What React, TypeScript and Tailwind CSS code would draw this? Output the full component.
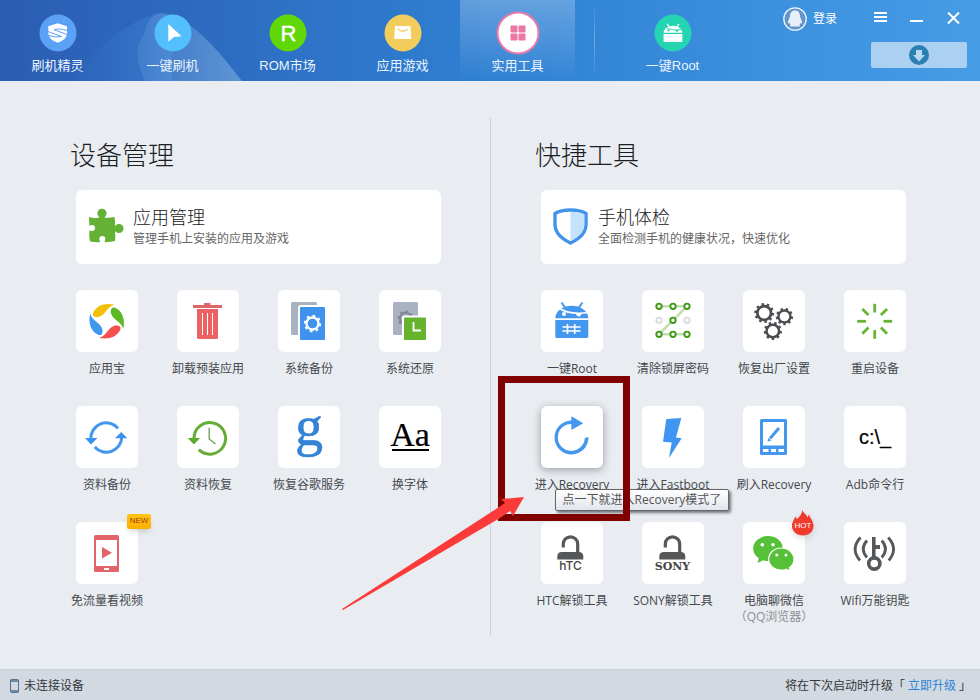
import React from "react";

type Tool = {
  name: string
  icon: React.ReactNode
  note?: string
  badge?: 'new' | 'hot'
  hovered?: boolean
  tip?: string
}

type NavItemProps = {
  name: string
  icon: React.ReactNode
  active?: boolean
}

const Tile = ({children}: { children: React.ReactNode }) => (
  <svg viewBox="0 0 62 62" className="size-full overflow-visible" aria-hidden="true">{children}</svg>
)

// ring with evenly spaced teeth drawn as a dashed stroke
const Gear = ({x, y, r, color, teeth = 9}: { x: number, y: number, r: number, color: string, teeth?: number }) => (
  <g fill="none" stroke={color} transform={`translate(${x} ${y})`}>
    <circle r={r * 0.7} strokeWidth={r * 0.28}/>
    <circle r={r * 0.88} strokeWidth={r * 0.26} pathLength={teeth * 2} strokeDasharray="0.9 1.1"/>
  </g>
)

const Padlock = ({x}: { x: number }) => (
  <g transform={`translate(${x} 0)`}>
    <path d="M6 25.5V22a7.2 7.2 0 0 1 14.4 0v9" fill="none" stroke="#555759" strokeWidth="3.2"/>
    <path d="M0 37.500v-3Q0 30 4.500 30h17Q26 30 26 34.500v3z" fill="#555759"/>
  </g>
)

const AndroidHead = ({color, strap}: { color: string, strap: string }) => (
  <g>
    <path d="M20.500 12.500L24 17.500M41.500 12.500L38 17.500" stroke={color} strokeWidth="2"/>
    <path d="M14.300 28.300C14.500 20.500 22 15.700 30.800 15.700S47 20.500 47.300 28.300z" fill={color}/>
    <path d="M17 17.500Q28 25.500 47.500 22.500" fill="none" stroke={strap} strokeWidth="1.600"/>
    <circle cx="23" cy="24" r="2" fill={strap}/>
    <path d="M34.500 23.200l6.500 0-2 3.200q-3 .500-4.500-3.200z" fill={strap}/>
  </g>
)

const deviceTools: Tool[] = [
  {
    name: '应用宝',
    icon: (
      <Tile>
        {['#f3c007', '#5cbb25', '#f4504f', '#4196ee'].map((c, i) => (
          <path key={c} fill={c} transform={`rotate(${i * 90} 30.700 31.300)`}
                d="M38.500 14.800C29.500 12.500 20 15.500 17 23.300C16 27 20 27.800 23.500 26.700C30 24.500 30.500 16.800 38.500 14.800Z"/>
        ))}
      </Tile>
    )
  },
  {
    name: '卸载预装应用',
    icon: (
      <Tile>
        <path d="M27 13h6.500v2H45v3H16v-3h11z" fill="#dd666b"/>
        <path d="M20 19h21v28.500q0 1.500-1.500 1.500h-18q-1.500 0-1.500-1.500z" fill="#ec6164"/>
        <path d="M25.500 23v22M30.500 23v22M35.500 23v22" stroke="#fff" strokeWidth="1"/>
      </Tile>
    )
  },
  {
    name: '系统备份',
    icon: (
      <Tile>
        <rect x="13" y="12" width="26" height="33" rx="1.500" fill="#a9b2c0"/>
        <rect x="21" y="16" width="27" height="35" rx="2" fill="#3f93ee" stroke="#fff" strokeWidth="2"/>
        <Gear x={34.5} y={33.5} r={8.6} color="#fff" teeth={8}/>
      </Tile>
    )
  },
  {
    name: '系统还原',
    icon: (
      <Tile>
        <rect x="14" y="12" width="25" height="33" rx="1.500" fill="#a9b2c2"/>
        <Gear x={26.5} y={28.5} r={8} color="#848799" teeth={8}/>
        <rect x="24" y="26.500" width="24" height="24.500" rx="2" fill="#66b32e" stroke="#fff" strokeWidth="2"/>
        <path d="M34.500 32v8.500H42" fill="none" stroke="#fff" strokeWidth="1.800"/>
      </Tile>
    )
  },
  {
    name: '资料备份',
    icon: (
      <Tile>
        <g fill="none" stroke="#4396ee" strokeWidth="3">
          <path d="M14.800 33A15.500 15.500 0 0 1 42 22.200"/>
          <path d="M18.700 41A15.500 15.500 0 0 0 45.800 31"/>
        </g>
        <path d="M9 32h12.500L15 38.500zM39 32.300h12.300l-6-6.300z" fill="#3a90ee"/>
      </Tile>
    )
  },
  {
    name: '资料恢复',
    icon: (
      <Tile>
        <path d="M17 33A15.800 15.800 0 1 1 21.800 43.700" fill="none" stroke="#66ad36" strokeWidth="3"/>
        <path d="M10.700 32H23l-6 6.500z" fill="#59ab2b"/>
        <path d="M32.200 21.700v11.200l6.300 5" fill="none" stroke="#66a04a" strokeWidth="1.300"/>
      </Tile>
    )
  },
  {
    name: '恢复谷歌服务',
    icon: (
      <Tile>
        <text x="31" y="39" textAnchor="middle" fill="#3583d6" stroke="#3583d6" strokeWidth="0.600"
              className="font-['Liberation_Serif',serif] text-[56px]">g</text>
      </Tile>
    )
  },
  {
    name: '换字体',
    icon: (
      <Tile>
        <text x="31" y="40" textAnchor="middle" fill="#000" stroke="#000" strokeWidth="0.200"
              className="font-['Liberation_Serif',serif] text-[34px]">Aa</text>
        <path d="M13 44h37" stroke="#000" strokeWidth="2"/>
      </Tile>
    )
  },
  {
    name: '免流量看视频',
    badge: 'new',
    icon: (
      <Tile>
        <rect x="18" y="13" width="25" height="37" rx="1.500" fill="#e2646a"/>
        <path d="M20 18h21v26H20zM28 46h5v2h-5z" fill="#fff"/>
        <path d="M26 25l10 5.700-10 5.700z" fill="#e2646a"/>
      </Tile>
    )
  },
]

const quickTools: Tool[] = [
  {
    name: '一键Root',
    icon: (
      <Tile>
        <AndroidHead color="#4497ee" strap="#fff"/>
        <path d="M14.300 30h33v16.500q0 1.500-1.500 1.500h-30q-1.500 0-1.500-1.500z" fill="#4497ee"/>
        <path d="M26.500 34v10M33.700 34v10M21.500 37h18M21.500 41h18" stroke="#fff" strokeWidth="1.600"/>
      </Tile>
    )
  },
  {
    name: '清除锁屏密码',
    icon: (
      <Tile>
        <path d="M17 16.300h28l-28 28h28" fill="none" stroke="#c3dfaf" strokeWidth="2.600"/>
        {[17, 31, 45].map(x => [16.3, 30.3, 44.3].map(y => (
          <circle key={`${x}-${y}`} cx={x} cy={y} r="2.700" fill="#fff" strokeWidth="1.900"
                  stroke={y === 30.3 && x !== 31 ? '#dcdcdc' : '#3f9b16'}/>
        )))}
      </Tile>
    )
  },
  {
    name: '恢复出厂设置',
    icon: (
      <Tile>
        <Gear x={21.2} y={23} r={9.8} color="#4a4c50" teeth={10}/>
        <Gear x={41.4} y={26.5} r={8.6} color="#4a4c50"/>
        <Gear x={29.8} y={41} r={9} color="#4a4c50"/>
      </Tile>
    )
  },
  {
    name: '重启设备',
    icon: (
      <Tile>
        {[0, 45, 90, 135, 180, 225, 270, 315].map(a => (
          <path key={a} d="M30.700 13.800v8.700" stroke="#68b436" strokeWidth="2.800"
                transform={`rotate(${a} 30.700 31.300)`}/>
        ))}
      </Tile>
    )
  },
  {
    name: '进入Recovery',
    hovered: true,
    tip: '点一下就进入Recovery模式了',
    icon: (
      <Tile>
        <path d="M47.500 31L43.800 32A13.500 13.500 0 1 1 31 17.900V14.500A17 17 0 1 0 47.500 31z" fill="#4497ee"/>
        <path d="M30.300 10.300l12 7-12 6.700z" fill="#4497ee"/>
      </Tile>
    )
  },
  {
    name: '进入Fastboot',
    icon: (
      <Tile>
        <path d="M24.300 13l15-1-5.300 19.500 5.700.800L27 52l2.700-15.500-8.700-.800z" fill="#3f96f2"/>
      </Tile>
    )
  },
  {
    name: '刷入Recovery',
    icon: (
      <Tile>
        <rect x="17" y="13" width="27" height="36" rx="1.500" fill="#4497ee"/>
        <path d="M20 16h21v23.500H20zM20 43h5.500v3H20zM28 43h5v3h-5zM35.500 43H41v3h-5.500z" fill="#fff"/>
        <path d="M27 32.500l9-10.500" stroke="#4497ee" strokeWidth="3"/>
        <path d="M25.300 32l3 2.600-3.800 1.200z" fill="#4497ee"/>
      </Tile>
    )
  },
  {
    name: 'Adb命令行',
    icon: (
      <Tile>
        <text x="31" y="38" textAnchor="middle" fill="#000" stroke="#000" strokeWidth="0.200"
              className="font-['Liberation_Sans',sans-serif] text-[20px]">c:\_</text>
      </Tile>
    )
  },
  {
    name: 'HTC解锁工具',
    icon: (
      <Tile>
        <Padlock x={16.3}/>
        <text x="29.500" y="48" textAnchor="middle" fill="#444"
              className="font-[Inter,sans-serif] text-[12px] font-medium">hTC</text>
      </Tile>
    )
  },
  {
    name: 'SONY解锁工具',
    icon: (
      <Tile>
        <Padlock x={17.3}/>
        <text x="30.500" y="48" textAnchor="middle" fill="#444"
              className="font-['DejaVu_Serif',serif] text-[11px] font-bold">SONY</text>
      </Tile>
    )
  },
  {
    name: '电脑聊微信',
    note: '（QQ浏览器）',
    badge: 'hot',
    icon: (
      <Tile>
        <path d="M25 14c8.300 0 14.800 5.500 14.800 12.500S33.300 39 25 39c-2 0-3.500-.300-5-.800L14.500 41l1.300-4.700C12.300 34 10.200 30.500 10.200 26.500 10.200 19.500 16.700 14 25 14z" fill="#55c038"/>
        <path d="M38.300 26c7 0 12.700 5 12.700 11.200 0 3.500-1.800 6.500-4.600 8.500l1 3.500-4-2c-1.600.600-3.300.900-5.100.900-7 0-12.600-4.800-12.600-10.900S31.300 26 38.300 26z" fill="#55c038" stroke="#fff" strokeWidth="1.200"/>
        <g fill="#fff">
          <circle cx="19.300" cy="22.700" r="1.800"/>
          <circle cx="30" cy="22.700" r="1.800"/>
          <circle cx="33.800" cy="33" r="1.500"/>
          <circle cx="43" cy="33" r="1.500"/>
        </g>
      </Tile>
    )
  },
  {
    name: 'Wifi万能钥匙',
    icon: (
      <Tile>
        <g fill="none" stroke="#55585b" strokeWidth="2.800">
          <circle cx="30.300" cy="41.500" r="5.600" strokeWidth="3.600"/>
          <path d="M29.800 15v21" strokeWidth="3.600"/>
          <path d="M31 25h5" strokeWidth="4"/>
          <path d="M23 18.500Q15.500 27 23 35.500M16.500 15.500Q6 27 16 38.500"/>
          <path d="M37.700 18.500Q45.200 27 37.700 35.500M44.200 15.500Q54.700 27 44.700 38.500"/>
        </g>
      </Tile>
    )
  },
]

const navItems: NavItemProps[] = [
  {
    name: '刷机精灵',
    icon: (
      <svg viewBox="0 0 38 38" className="size-[38px]">
        <circle cx="19" cy="19" r="18.500" fill="#5ba2f7"/>
        <path d="M18.700 9.300L28 12.300V19q0 6.500-9.300 9.700Q9.300 25.500 9.300 19v-6.700z" fill="#fff"/>
        <path d="M28.500 16.500q-9-2.500-13.500-.800l13.500 5M9 17.500l13.500 5q-6 1.500-13-1" fill="none" stroke="#5ba2f7" strokeWidth="1"/>
      </svg>
    )
  },
  {
    name: '一键刷机',
    icon: (
      <svg viewBox="0 0 38 38" className="size-[38px]">
        <circle cx="19" cy="19" r="18.500" fill="#53bffc"/>
        <path d="M14.300 10l13.200 12.300-7.500.700-5.700 4.700z" fill="#fff"/>
      </svg>
    )
  },
  {
    name: 'ROM市场',
    icon: (
      <svg viewBox="0 0 38 38" className="size-[38px]">
        <circle cx="19" cy="19" r="18.500" fill="#60d808"/>
        <text x="19.500" y="26.500" textAnchor="middle" fill="#fff" stroke="#fff" strokeWidth="0.400"
              className="font-['Liberation_Sans',sans-serif] text-[22px]">R</text>
      </svg>
    )
  },
  {
    name: '应用游戏',
    icon: (
      <svg viewBox="0 0 38 38" className="size-[38px]">
        <circle cx="19" cy="19" r="18.500" fill="#f3cd5c"/>
        <path d="M11 12h15.500l.700 13H10.300z" fill="#fff"/>
        <path d="M14 15q5 4.500 9.500 0" fill="none" stroke="#f3cd5c" strokeWidth="1.200"/>
      </svg>
    )
  },
  {
    name: '实用工具',
    active: true,
    icon: (
      <svg viewBox="0 0 44 44" className="size-[44px] shrink-0">
        <circle cx="22" cy="22" r="20.500" fill="#fff" stroke="#ec78ae" strokeWidth="2"/>
        <g fill="#ec77a2">
          <rect x="14.500" y="14.500" width="7" height="7" rx="1"/>
          <rect x="22.500" y="14.500" width="7" height="7" rx="1"/>
          <rect x="14.500" y="22.500" width="7" height="7" rx="1"/>
          <rect x="22.500" y="22.500" width="7" height="7" rx="1"/>
        </g>
      </svg>
    )
  },
]

const rootItem: NavItemProps = {
  name: '一键Root',
  icon: (
    <svg viewBox="0 0 38 38" className="size-[38px]">
      <circle cx="19" cy="19" r="18.500" fill="#25d5b2"/>
      <g transform="translate(1.400 2.700) scale(0.570)">
        <AndroidHead color="#fff" strap="#25d5b2"/>
        <path d="M14.300 30.500h33V43q0 1.500-1.500 1.500h-30q-1.500 0-1.500-1.500z" fill="#fff"/>
      </g>
    </svg>
  )
}

export default function App() {
  return (
    <div className="flex min-h-screen flex-col bg-[#e9edf2] font-['Open_Sans','Noto_Sans_CJK_SC',sans-serif] text-xs text-[#44484d]">
      <Header/>
      <main className="flex flex-1">
        <section className="flex-1 pt-14 pr-[49px] pl-[70px]">
          <h2 className="mb-[17px] text-[26px] leading-9 font-light text-[#1c1e22]">设备管理</h2>
          <div className="pl-[6px]">
            <FeatureCard title="应用管理" text="管理手机上安装的应用及游戏" icon={<Puzzle/>}/>
            <ToolGrid tools={deviceTools}/>
          </div>
        </section>
        <div className="mt-[37px] mb-[34px] w-px bg-[#cbd0d6]"/>
        <section className="flex-1 pt-14 pr-[74px] pl-[44px]">
          <h2 className="mb-[17px] text-[26px] leading-9 font-light text-[#1c1e22]">快捷工具</h2>
          <div className="pl-[6px]">
            <FeatureCard title="手机体检" text="全面检测手机的健康状况，快速优化" icon={<Shield/>}/>
            <ToolGrid tools={quickTools}/>
          </div>
        </section>
      </main>
      <Footer/>
    </div>
  );
}

const Header = () => {
  return (
    <header className="relative flex h-[81px] overflow-hidden bg-linear-to-r from-[#2b5db2] via-[#2f80d3] to-[#469ce5] text-white">
      <svg viewBox="0 0 260 81" className="pointer-events-none absolute top-0 left-0 h-[81px] w-[260px]" aria-hidden="true">
        <defs>
          <linearGradient id="glow" x1="0" x2="1">
            <stop offset="0" stopColor="#3f86d8" stopOpacity="0"/>
            <stop offset="1" stopColor="#3f86d8" stopOpacity="0.500"/>
          </linearGradient>
          <linearGradient id="beam" x1="0" x2="1">
            <stop offset="0" stopColor="#8fbbea" stopOpacity="0.150"/>
            <stop offset="1" stopColor="#8fbbea" stopOpacity="0.500"/>
          </linearGradient>
        </defs>
        <path d="M70 81Q110 30 150 16Q160 11 172 16L172 81z" fill="url(#glow)"/>
        <path d="M145 81Q130 50 144 35Q148 14 162 13C190 16 218 50 242 81z" fill="url(#beam)"/>
      </svg>
      <nav className="relative flex">
        {navItems.map(item => <NavItem key={item.name} {...item}/>)}
        <div className="ml-[19px] mr-5 w-px bg-linear-to-b from-white/0 via-white/30 to-white/0"/>
        <NavItem {...rootItem}/>
      </nav>
      <div className="relative ml-auto flex flex-col pr-[13px]">
        <div className="flex h-9 items-center justify-end pr-[7px]">
          <button className="mr-[37px] flex items-center gap-1.5 pt-0.5">
            <svg viewBox="0 0 24 24" className="size-6">
              <circle cx="12" cy="12" r="11.200" fill="#6395c8" stroke="#e8f3ff" strokeWidth="1.300"/>
              <path d="M12 3.500c3.500 0 5 2.500 5 5.500 0 2 2 4 2 6.500 0 1.500-1 1-1.500.500-.300 1-.700 1.500-1.200 2 1 .500 1.200 1.500-.300 1.500H8c-1.500 0-1.300-1-.300-1.500-.500-.500-.900-1-1.200-2-.500.500-1.500 1-1.500-.500C5 13 7 11 7 9c0-3 1.500-5.500 5-5.500z" fill="#e7eff8"/>
            </svg>
            <span className="leading-4">登录</span>
          </button>
          <button aria-label="菜单" className="mr-[23px]">
            <svg viewBox="0 0 13 12" className="block h-3 w-[13px]"><path d="M0 1h13M0 5h13M0 9h13" stroke="#fff" strokeWidth="2"/></svg>
          </button>
          <button aria-label="最小化" className="mr-6">
            <svg viewBox="0 0 13 12" className="block h-3 w-[13px]"><path d="M0 9h13" stroke="#fff" strokeWidth="2"/></svg>
          </button>
          <button aria-label="关闭">
            <svg viewBox="0 0 13 12" className="block h-3 w-[13px]"><path d="M1 .500l11 11M12 .500l-11 11" stroke="#fff" strokeWidth="2"/></svg>
          </button>
        </div>
        <button aria-label="下载" className="mt-1.5 flex h-[26px] w-24 items-center justify-center self-end rounded-xs bg-[#abd0f1]">
          <svg viewBox="0 0 20 20" className="size-5">
            <circle cx="10" cy="10" r="10" fill="#2b80b3"/>
            <path d="M7 5h6v5h3l-6 6.500L4 10h3z" fill="#b8d9f2"/>
          </svg>
        </button>
      </div>
    </header>
  )
}

const NavItem = ({name, icon, active}: NavItemProps) => {
  return (
    <button className={`flex w-[115px] flex-col items-center pt-3.5 ${active ? 'bg-linear-to-b from-white/25 to-white/0' : ''}`}>
      <span className="flex h-[38px] items-center justify-center">{icon}</span>
      <span className="mt-1.5 font-['Liberation_Sans','Noto_Sans_CJK_SC',sans-serif] text-[13px] leading-4 text-[#eaf4ff]">{name}</span>
    </button>
  )
}

const FeatureCard = ({title, text, icon}: { title: string, text: string, icon: React.ReactNode }) => {
  return (
    <button className="flex h-[74px] w-full items-center gap-[9px] rounded-md bg-white pl-3 text-left">
      {icon}
      <span className="flex flex-col">
        <span className="text-[18px] leading-6 font-light text-[#16181b]">{title}</span>
        <span className="leading-5 text-[#666]">{text}</span>
      </span>
    </button>
  )
}

const ToolGrid = ({tools}: { tools: Tool[] }) => {
  return (
    <ul className="mt-[26px] grid grid-cols-[repeat(4,62px)] justify-between gap-y-[30px]">
      {tools.map(tool => <ToolItem key={tool.name} {...tool}/>)}
    </ul>
  )
}

const ToolItem = ({name, icon, note, badge, hovered, tip}: Tool) => {
  return (
    <li className="relative h-[86px]">
      <button className="flex w-full flex-col items-center whitespace-nowrap">
        <span className={`block size-[62px] rounded-md bg-white ${hovered ? 'shadow-[0_2px_8px_rgba(0,0,0,0.35)]' : ''}`}>{icon}</span>
        <span className="mt-[9px] leading-4">{name}</span>
        {note && <span className="leading-4 text-[#8d9196]">{note}</span>}
      </button>
      {badge === 'new' && (
        <span className="absolute -top-2 left-[51px] flex h-[15px] w-6 items-center justify-center rounded-xs bg-linear-to-b from-[#ffc414] to-[#fbb000] font-['Liberation_Sans',sans-serif] text-[8px] text-[#a03c00] shadow-md">NEW</span>
      )}
      {badge === 'hot' && (
        <span className="absolute -top-3 left-12 flex h-[26px] w-6 items-end justify-center">
          <svg viewBox="0 0 24 26" className="absolute inset-0 drop-shadow-md">
            <path d="M11.500 0c1 3.500 4 4 5 7.500l1.500-3c.500 2.500 4.500 6.500 4.500 11.500C22.500 21.500 18 25.500 12 25.500S1 21.500 1 16c0-4.500 2.500-6 3-9.500L6 9c2.500-2 5-5 5.500-9z" fill="#f03a2c"/>
          </svg>
          <span className="relative mb-1 font-['Liberation_Sans',sans-serif] text-[8px] leading-3 text-white">HOT</span>
        </span>
      )}
      {tip && <Hint text={tip}/>}
    </li>
  )
}

// tooltip, highlight frame and pointer arrow over the hovered tool
const Hint = ({text}: { text: string }) => {
  return (
    <div className="pointer-events-none absolute top-0 left-0 z-10">
      <div role="tooltip"
           className="absolute top-[83px] left-3.5 flex h-[22px] w-[174px] items-center justify-center rounded-xs border border-[#666] bg-linear-to-b from-white to-[#e2e5ee] whitespace-nowrap text-[#555] shadow-[2px_2px_3px_rgba(0,0,0,0.5)]">
        {text}
      </div>
      <div className="absolute -top-[30px] -left-[43px] h-[145px] w-[132px] border-7 border-[#800000]"/>
      <svg viewBox="0 0 184 114" className="absolute top-[90px] left-[-200px] h-[114px] w-[184px] max-w-none" aria-hidden="true">
        <path d="M1 113L158 11l6-4-4-4 23-2-11 19-3-5-10 7L2 114z" fill="#fb3a3a"/>
      </svg>
    </div>
  )
}

const Puzzle = () => (
  <svg viewBox="0 0 36 38" className="h-[38px] w-9" aria-hidden="true">
    <g fill="#63b236">
      <path d="M1 9q6 1.500 10.500.500 1-.800-.500-2.500h6q-1.500 2 0 2.700 4.500.300 9.500-.700 1 4.500.300 9.300l2.700.700v4l-2.500.500q.700 5 0 9.500-5 1.500-13 1-6 .500-12-.500-1.500-8 0-12-1-5-1-12.500z"/>
      <circle cx="14" cy="5.300" r="4.600"/>
      <circle cx="31" cy="20.500" r="4.500"/>
    </g>
    <g fill="#fff">
      <circle cx="4" cy="20" r="3"/>
      <path d="M0 18.500h3v3H0zM12.700 31h3.200l1.300 5h-6z"/>
      <circle cx="14.300" cy="31" r="3"/>
    </g>
  </svg>
)

const Shield = () => (
  <svg viewBox="0 0 36 38" className="h-[38px] w-9" aria-hidden="true">
    <path d="M17.500 2Q27 2 33 5.500v11q0 11-15.500 18.500Q2 27.500 2 16.500v-11Q8 2 17.500 2z" fill="#fff" stroke="#4493ea" strokeWidth="3.400"/>
    <path d="M17.500 3.700Q26 3.700 31.300 6.500v10q0 9.500-13.800 16.500z" fill="#c3e2fc"/>
  </svg>
)

const Footer = () => {
  return (
    <footer className="flex h-[31px] items-center border-t border-[#c9d1d9] bg-[#d2d9e0] pt-px pr-[9px] pl-2.5 text-[#33383c]">
      <svg viewBox="0 0 9 14" className="mr-[5px] h-3.5 w-[9px]" aria-hidden="true">
        <rect x=".500" y=".500" width="8" height="13" rx="1" fill="none" stroke="#52718a"/>
        <path d="M0 2h9M0 12h9" stroke="#52718a" strokeWidth="1.500"/>
      </svg>
      <span>未连接设备</span>
      <p className="ml-auto">将在下次启动时升级「<a href="#" className="mx-[3px] text-[#2a82d8]">立即升级</a>」</p>
    </footer>
  )
}
